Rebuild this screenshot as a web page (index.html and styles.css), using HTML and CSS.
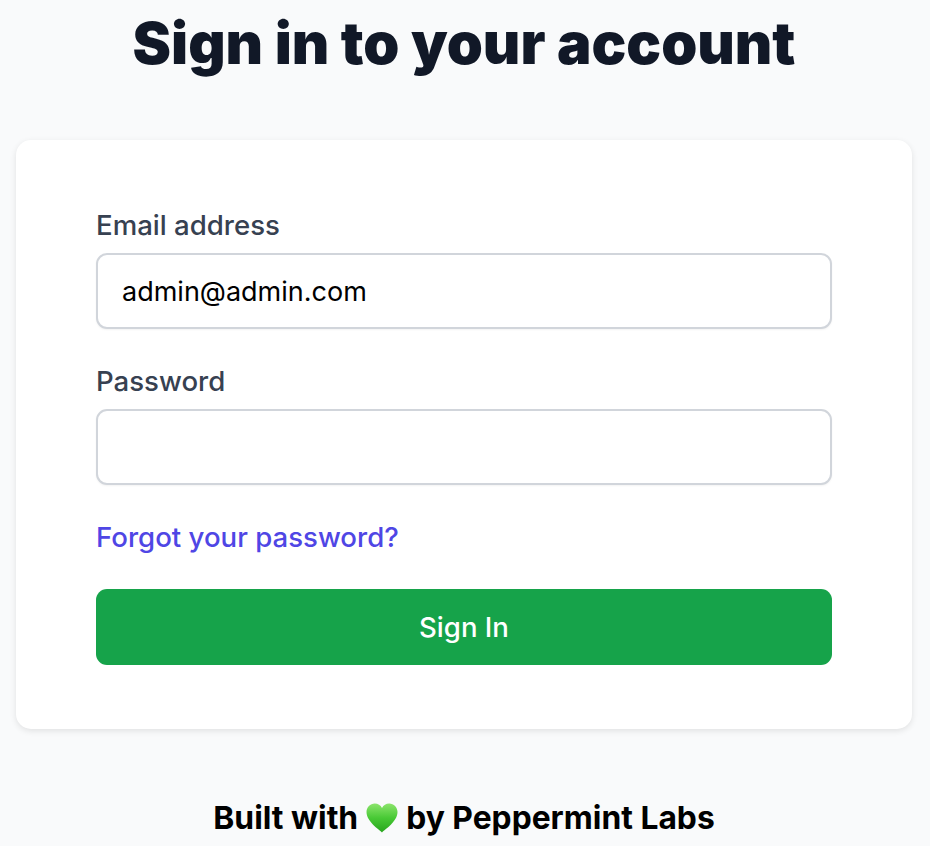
FILE: index.html
```html
<!DOCTYPE html>
<html lang="en">
<head>
    <meta charset="UTF-8">
    <meta name="viewport" content="width=device-width, initial-scale=1.0">
    <title>Sign in</title>
    <link rel="stylesheet" href="styles.css">
</head>
<body>
    <h1 class="title">Sign in to your account</h1>
    <main class="card">
        <form class="login-form">
            <div class="field">
                <label for="email">Email address</label>
                <input type="email" id="email" name="email" value="admin@admin.com">
            </div>
            <div class="field">
                <label for="password">Password</label>
                <input type="password" id="password" name="password">
            </div>
            <a class="forgot" href="#">Forgot your password?</a>
            <button type="submit" class="btn-signin">Sign In</button>
        </form>
    </main>
    <footer class="built-with">
        <span>Built with</span>
        <svg class="heart" viewBox="0 0 32 30" aria-hidden="true">
            <defs>
                <linearGradient id="heart-fill" x1="0" y1="0" x2="0" y2="1">
                    <stop offset="0" stop-color="#8ce46c"/>
                    <stop offset="0.5" stop-color="#48c935"/>
                    <stop offset="1" stop-color="#27a51d"/>
                </linearGradient>
            </defs>
            <path d="M16 29.500C13 26.400 0.500 18.500 0.500 9 0.500 4.200 4.200 0.500 8.800 0.500c3.100 0 5.800 1.700 7.200 4.400C17.400 2.200 20.100 0.500 23.200 0.500c4.600 0 8.300 3.700 8.300 8.500 0 9.500-12.500 17.400-15.500 20.500z" fill="url(#heart-fill)"/>
        </svg>
        <span>by Peppermint Labs</span>
    </footer>
</body>
</html>
```

FILE: styles.css
```css
body {
    font-family: Inter, "Liberation Sans", sans-serif;
    margin: 0;
    padding: 0 2px 0 0;
    height: 846px;
    overflow: hidden;
    background-color: #f9fafb;
}

.title {
    margin: 0;
    height: 140px;
    padding-top: 7px;
    box-sizing: border-box;
    text-align: center;
    font-size: 57.8px;
    line-height: 72px;
    font-weight: 900;
    color: #111827;
}

.card {
    margin: 0 16px;
    padding: 68px 80px 64px;
    background-color: #fff;
    border-radius: 15px;
    box-shadow: 0 2px 6px rgba(0, 0, 0, 0.1);
}

.login-form {
    display: flex;
    flex-direction: column;
}

.field {
    margin-bottom: 35px;
}

.field label {
    display: block;
    margin-bottom: 10px;
    font-size: 27.6px;
    line-height: 35px;
    font-weight: 500;
    color: #374151;
}

.field input {
    display: block;
    width: 100%;
    height: 76px;
    box-sizing: border-box;
    padding: 0 24px;
    border: 2px solid #d1d5db;
    border-radius: 11px;
    outline: none;
    background-color: #fff;
    box-shadow: 0 1px 2px rgba(0, 0, 0, 0.05);
    font-family: inherit;
    font-size: 27px;
    color: #000;
}

.forgot {
    font-size: 27.6px;
    line-height: 35px;
    font-weight: 500;
    color: #4f46e5;
    text-decoration: none;
}

.btn-signin {
    height: 76px;
    margin-top: 34px;
    border: none;
    border-radius: 11px;
    background-color: #16a34a;
    color: #fff;
    font-family: inherit;
    font-size: 27.6px;
    font-weight: 500;
    cursor: pointer;
}

.built-with {
    display: flex;
    justify-content: center;
    align-items: center;
    gap: 8px;
    margin-top: 70px;
    font-size: 31.8px;
    line-height: 38px;
    font-weight: 700;
    color: #000;
}

.heart {
    width: 32px;
    height: 30px;
}
```
